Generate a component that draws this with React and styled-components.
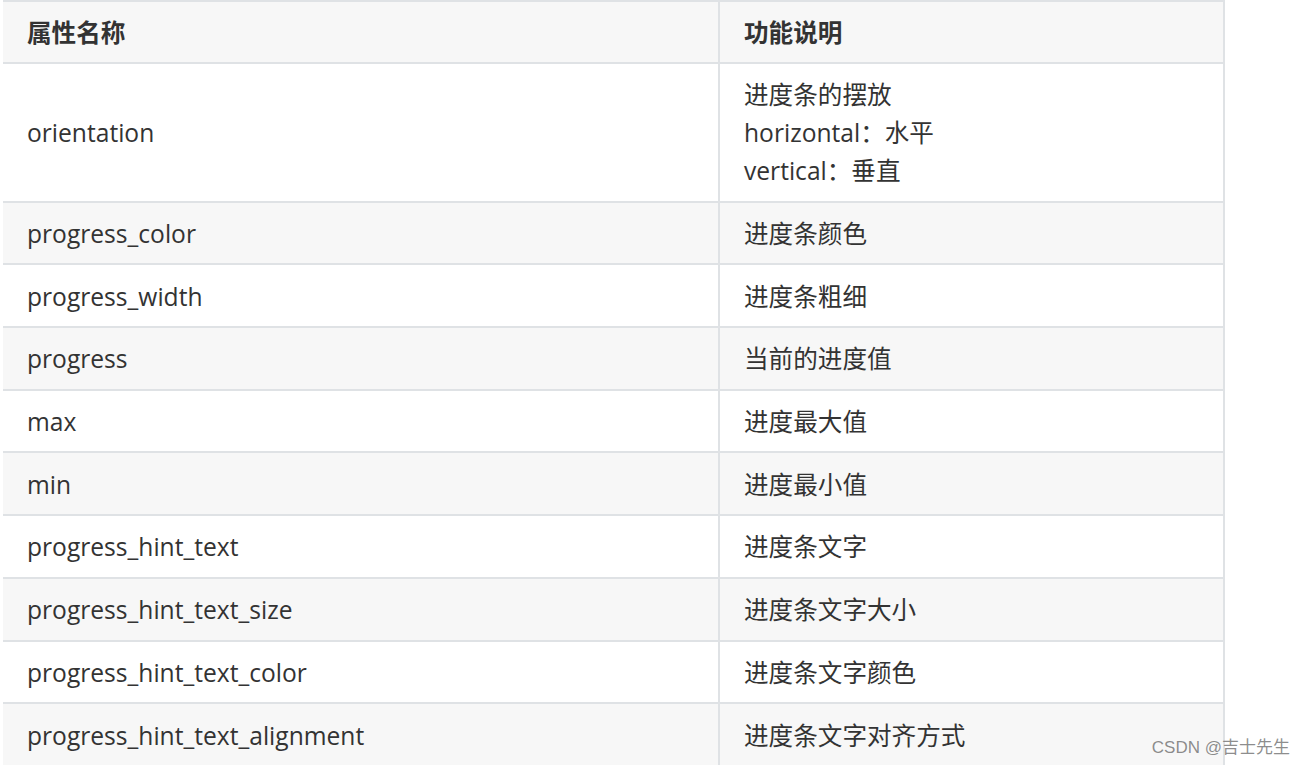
import React from "react";
import styled, { createGlobalStyle } from "styled-components";

const GlobalStyle = createGlobalStyle`
  html, body {
    margin: 0;
    padding: 0;
    background: #fff;
  }
  body {
    font-family: "Open Sans", "Noto Sans CJK SC", sans-serif;
    color: #333;
  }
`;

const rows = [
  { name: "orientation", desc: ["进度条的摆放", "horizontal：水平", "vertical：垂直"] },
  { name: "progress_color", desc: ["进度条颜色"] },
  { name: "progress_width", desc: ["进度条粗细"] },
  { name: "progress", desc: ["当前的进度值"] },
  { name: "max", desc: ["进度最大值"] },
  { name: "min", desc: ["进度最小值"] },
  { name: "progress_hint_text", desc: ["进度条文字"] },
  { name: "progress_hint_text_size", desc: ["进度条文字大小"] },
  { name: "progress_hint_text_color", desc: ["进度条文字颜色"] },
  { name: "progress_hint_text_alignment", desc: ["进度条文字对齐方式"] },
];

const App = () => {
  return (
    <Page>
      <GlobalStyle />
      <Table>
        <thead>
          <Row $shade>
            <HeadCell>属性名称</HeadCell>
            <HeadCell $last>功能说明</HeadCell>
          </Row>
        </thead>
        <tbody>
          {rows.map((row, index) => (
            <Row key={row.name} $shade={index % 2 === 1}>
              <Cell>{row.name}</Cell>
              <Cell $last>
                {row.desc.map((line) => (
                  <Line key={line}>{line}</Line>
                ))}
              </Cell>
            </Row>
          ))}
        </tbody>
      </Table>
      <Watermark>CSDN @吉士先生</Watermark>
    </Page>
  );
};

export default App;

const Page = styled.div`
  position: relative;
  width: 1306px;
  height: 765px;
  overflow: hidden;
  padding-left: 3px;
  box-sizing: border-box;
`;

const Table = styled.table`
  border-collapse: separate;
  border-spacing: 0;
  border-top: 2px solid #dfe2e5;
  border-right: 2px solid #dfe2e5;
  table-layout: fixed;
  width: 1222px;
  font-size: 24.6px;
  line-height: 38px;
`;

const Row = styled.tr`
  background-color: ${(props) => (props.$shade ? "#f7f7f7" : "#fff")};
`;

const HeadCell = styled.th`
  text-align: left;
  font-weight: 700;
  color: #333;
  padding: 12px 24px 10px;
  width: ${(props) => (props.$last ? "455px" : "667px")};
  border-bottom: 2px solid #dfe2e5;
  border-right: ${(props) => (props.$last ? "none" : "2px solid #dfe2e5")};
`;

const Cell = styled.td`
  padding: 12.35px 24px 10.35px;
  vertical-align: middle;
  color: #333;
  border-bottom: 2px solid #dfe2e5;
  border-right: ${(props) => (props.$last ? "none" : "2px solid #dfe2e5")};
  white-space: nowrap;
`;

const Line = styled.div`
  display: block;
`;

const Watermark = styled.div`
  position: absolute;
  right: 16px;
  bottom: 7px;
  font-family: "Liberation Sans", "Noto Sans CJK SC", sans-serif;
  font-size: 17px;
  color: rgba(120, 120, 120, 0.85);
  pointer-events: none;
`;
